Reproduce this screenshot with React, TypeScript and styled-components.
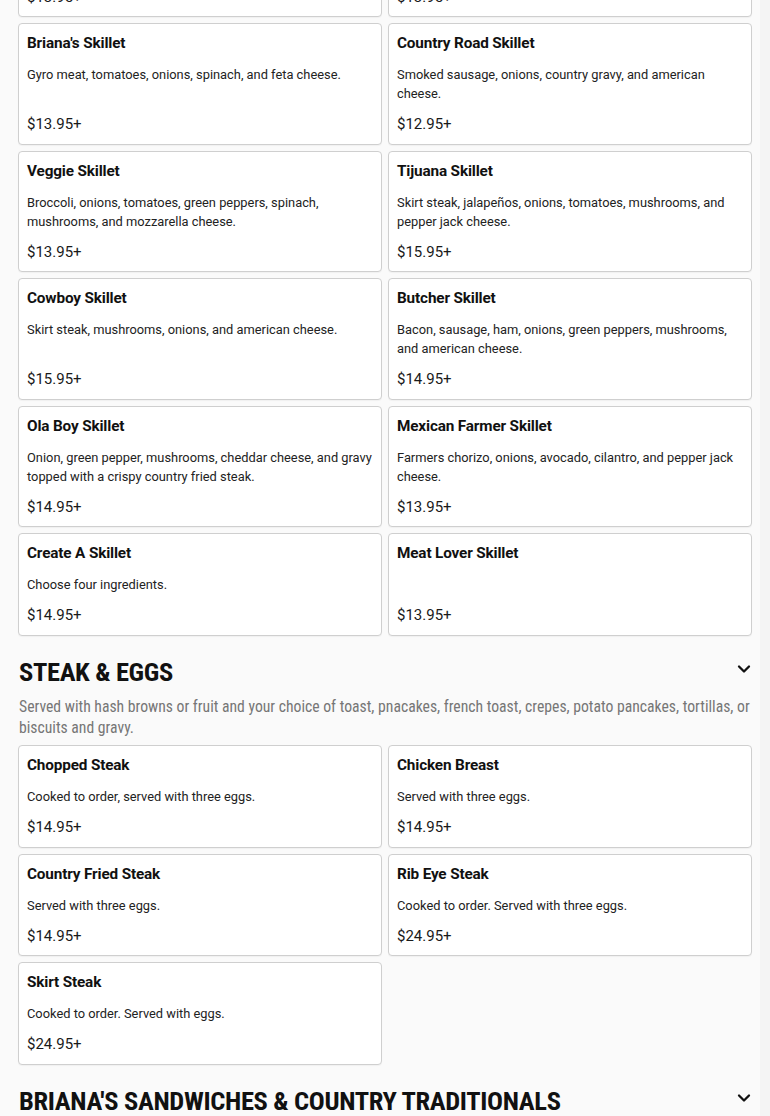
import React from "react";
import styled, { createGlobalStyle } from "styled-components";

const Global = createGlobalStyle`
  html, body { margin: 0; padding: 0; }
  body {
    background: #f4f4f4;
    font-family: Roboto, "Noto Sans", Arial, sans-serif;
    color: #111;
    overflow: hidden;
  }
`;

const Page = styled.div`
  width: 760px;
  box-sizing: border-box;
  background: #fafafa;
  padding: 0 8px 40px 18px;
  margin-top: -104.5px;
`;

const Grid = styled.div`
  display: grid;
  grid-template-columns: 364px 364px;
  column-gap: 6px;
  row-gap: 6px;
`;

const Card = styled.div`
  display: flex;
  flex-direction: column;
  background: #fff;
  border: 1px solid #cfcfcf;
  border-radius: 4px;
  padding: 9px 8px 7.5px 8px;
  box-shadow: 0 1px 1px rgba(0, 0, 0, 0.04);
`;

const Title = styled.div`
  font-family: Roboto, Arial, sans-serif;
  font-size: 15.3px;
  line-height: 20px;
  font-weight: 700;
  color: #111;
  margin-bottom: 12px;
  letter-spacing: -0.15px;
`;

const Desc = styled.div`
  font-size: 12.85px;
  line-height: 19px;
  color: #222;
  min-height: 19px;
`;

const Price = styled.div`
  margin-top: auto;
  padding-top: 9px;
  font-size: 15px;
  line-height: 24px;
  color: #1a1a1a;
`;

const Section = styled.section`
  margin-top: 19.5px;
`;

const HeadRow = styled.div`
  display: flex;
  align-items: center;
  justify-content: space-between;
  padding-left: 1px;
`;

const Heading = styled.h2`
  margin: 0;
  font-family: "Liberation Sans Narrow", "Roboto Condensed", Roboto, sans-serif;
  font-size: 26.5px;
  line-height: 34px;
  font-weight: 700;
  color: #111;
  letter-spacing: -0.35px;
`;

const Chevron = styled.svg`
  width: 16px;
  height: 16px;
  margin-top: -6px;
  flex: none;
`;

const SectionDesc = styled.p`
  margin: 7px 0 7px 1px;
  font-family: "Liberation Sans Narrow", "Roboto Condensed", Roboto, sans-serif;
  font-size: 15.7px;
  line-height: 21px;
  color: #767676;
`;

type Item = { name: string; desc?: string; price: string };

const prevRow: Item[] = [
  { name: "Farmers Skillet", desc: "Ham, bacon, sausage, onions, green peppers, and cheddar cheese.", price: "$13.95+" },
  { name: "Chorizo Skillet", desc: "Chorizo, onions, tomatoes, jalapeños, and pepper jack cheese.", price: "$13.95+" },
];

const skillets: Item[] = [
  { name: "Briana's Skillet", desc: "Gyro meat, tomatoes, onions, spinach, and feta cheese.", price: "$13.95+" },
  { name: "Country Road Skillet", desc: "Smoked sausage, onions, country gravy, and american cheese.", price: "$12.95+" },
  { name: "Veggie Skillet", desc: "Broccoli, onions, tomatoes, green peppers, spinach, mushrooms, and mozzarella cheese.", price: "$13.95+" },
  { name: "Tijuana Skillet", desc: "Skirt steak, jalapeños, onions, tomatoes, mushrooms, and pepper jack cheese.", price: "$15.95+" },
  { name: "Cowboy Skillet", desc: "Skirt steak, mushrooms, onions, and american cheese.", price: "$15.95+" },
  { name: "Butcher Skillet", desc: "Bacon, sausage, ham, onions, green peppers, mushrooms, and american cheese.", price: "$14.95+" },
  { name: "Ola Boy Skillet", desc: "Onion, green pepper, mushrooms, cheddar cheese, and gravy topped with a crispy country fried steak.", price: "$14.95+" },
  { name: "Mexican Farmer Skillet", desc: "Farmers chorizo, onions, avocado, cilantro, and pepper jack cheese.", price: "$13.95+" },
  { name: "Create A Skillet", desc: "Choose four ingredients.", price: "$14.95+" },
  { name: "Meat Lover Skillet", price: "$13.95+" },
];

const steaks: Item[] = [
  { name: "Chopped Steak", desc: "Cooked to order, served with three eggs.", price: "$14.95+" },
  { name: "Chicken Breast", desc: "Served with three eggs.", price: "$14.95+" },
  { name: "Country Fried Steak", desc: "Served with three eggs.", price: "$14.95+" },
  { name: "Rib Eye Steak", desc: "Cooked to order. Served with three eggs.", price: "$24.95+" },
  { name: "Skirt Steak", desc: "Cooked to order. Served with eggs.", price: "$24.95+" },
];

const MenuCard = ({ item }: { item: Item }) => (
  <Card>
    <Title>{item.name}</Title>
    <Desc>{item.desc ?? ""}</Desc>
    <Price>{item.price}</Price>
  </Card>
);

const Down = () => (
  <Chevron viewBox="0 0 16 16" fill="none">
    <path d="M3 5.5 L8 10.5 L13 5.5" stroke="#111" strokeWidth="2.3" strokeLinecap="round" strokeLinejoin="round" />
  </Chevron>
);

export default function App() {
  return (
    <>
      <Global />
      <Page>
        <Grid>
          {[...prevRow, ...skillets].map((it) => (
            <MenuCard key={it.name} item={it} />
          ))}
        </Grid>
        <Section>
          <HeadRow>
            <Heading>STEAK &amp; EGGS</Heading>
            <Down />
          </HeadRow>
          <SectionDesc>
            Served with hash browns or fruit and your choice of toast, pnacakes, french toast, crepes, potato pancakes, tortillas, or biscuits and gravy.
          </SectionDesc>
          <Grid>
            {steaks.map((it) => (
              <MenuCard key={it.name} item={it} />
            ))}
          </Grid>
        </Section>
        <Section>
          <HeadRow>
            <Heading>BRIANA'S SANDWICHES &amp; COUNTRY TRADITIONALS</Heading>
            <Down />
          </HeadRow>
        </Section>
      </Page>
    </>
  );
}
